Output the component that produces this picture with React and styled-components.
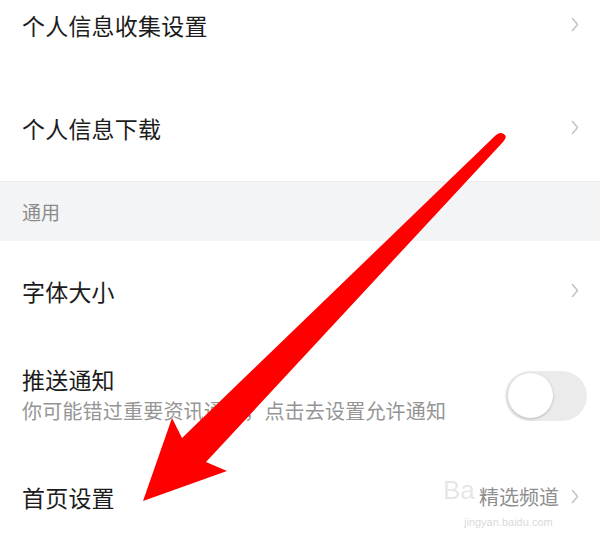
import styled, { createGlobalStyle } from "styled-components";

const GlobalStyle = createGlobalStyle`
  html, body {
    margin: 0;
    padding: 0;
    background: #ffffff;
  }
  body {
    width: 600px;
    height: 540px;
    overflow: hidden;
    font-family: "Noto Sans CJK SC", "Noto Sans", sans-serif;
  }
`;

const Chevron = () => (
  <svg width="8" height="15" viewBox="0 0 8 15">
    <path d="M1.5 1.5 L6.5 7.5 L1.5 13.5" fill="none" stroke="#c4c4c4" strokeWidth="1.6" strokeLinecap="round" strokeLinejoin="round" />
  </svg>
);

const Arrow = () => (
  <ArrowLayer width="600" height="540" viewBox="0 0 600 540">
    <path
      d="M496 135 Q501 131 505 135 Q507 138 503 142 L206 462 L227 471 L143 501 L172 418 L182 438 Z"
      fill="#ff0000"
    />
  </ArrowLayer>
);

const App = () => {
  return (
    <Page>
      <GlobalStyle />
      <List>
        <Row>
          <Title>个人信息收集设置</Title>
          <Chevron />
        </Row>
        <Row>
          <Title>个人信息下载</Title>
          <Chevron />
        </Row>
        <Section>通用</Section>
        <Row>
          <Title>字体大小</Title>
          <Chevron />
        </Row>
        <Row $toggle>
          <TextBlock>
            <Title>推送通知</Title>
            <Sub>你可能错过重要资讯通知，点击去设置允许通知</Sub>
          </TextBlock>
          <Toggle>
            <Knob />
          </Toggle>
        </Row>
        <Row>
          <Title>首页设置</Title>
          <Right>
            <Value>精选频道</Value>
            <Chevron />
          </Right>
        </Row>
      </List>
      <Watermark>
        <WmBig>Ba</WmBig>
        <WmSmall>jingyan.baidu.com</WmSmall>
      </Watermark>
      <Arrow />
    </Page>
  );
};

export default App;

const Page = styled.div`
  position: relative;
  width: 600px;
  height: 540px;
  overflow: hidden;
  background: #ffffff;
`;

const List = styled.div`
  display: flex;
  flex-direction: column;
  margin-top: -25px;
`;

const Row = styled.div`
  height: 103px;
  display: flex;
  align-items: center;
  justify-content: space-between;
  padding: 0 ${(p) => (p.$toggle ? "13px" : "21px")} 4px 22px;
  box-sizing: border-box;
`;

const Title = styled.div`
  font-size: 23px;
  line-height: 30px;
  color: #1c1c1c;
  letter-spacing: 0.2px;
`;

const TextBlock = styled.div`
  display: flex;
  flex-direction: column;
  gap: 3px;
  padding-top: 2px;
`;

const Sub = styled.div`
  font-size: 20px;
  line-height: 28px;
  color: #959595;
  letter-spacing: 0.2px;
`;

const Section = styled.div`
  height: 60px;
  display: flex;
  align-items: center;
  padding-left: 22px;
  background: #f3f4f6;
  border-top: 1px solid #ececee;
  box-sizing: border-box;
  font-size: 19px;
  color: #8a8a8a;
`;

const Toggle = styled.div`
  width: 82px;
  height: 50px;
  border-radius: 25px;
  background: #ebebeb;
  display: flex;
  align-items: center;
  padding-left: 3px;
  box-sizing: border-box;
  margin-bottom: -4px;
`;

const Knob = styled.div`
  width: 45px;
  height: 45px;
  border-radius: 50%;
  background: #ffffff;
  box-shadow: 0 1px 3px rgba(0, 0, 0, 0.22);
`;

const Right = styled.div`
  display: flex;
  align-items: center;
  gap: 12px;
`;

const Value = styled.div`
  font-size: 20px;
  color: #8f8f8f;
`;

const Watermark = styled.div`
  position: absolute;
  left: 443px;
  top: 474px;
  display: flex;
  flex-direction: column;
  align-items: flex-start;
  pointer-events: none;
`;

const WmBig = styled.div`
  font-family: "Liberation Sans", sans-serif;
  font-size: 26px;
  line-height: 32px;
  color: rgba(200, 200, 200, 0.45);
`;

const WmSmall = styled.div`
  font-family: "Liberation Sans", sans-serif;
  font-size: 11px;
  color: rgba(190, 190, 190, 0.6);
  margin-top: 10px;
  margin-left: 21px;
`;

const ArrowLayer = styled.svg`
  position: absolute;
  left: 0;
  top: 0;
  pointer-events: none;
`;
